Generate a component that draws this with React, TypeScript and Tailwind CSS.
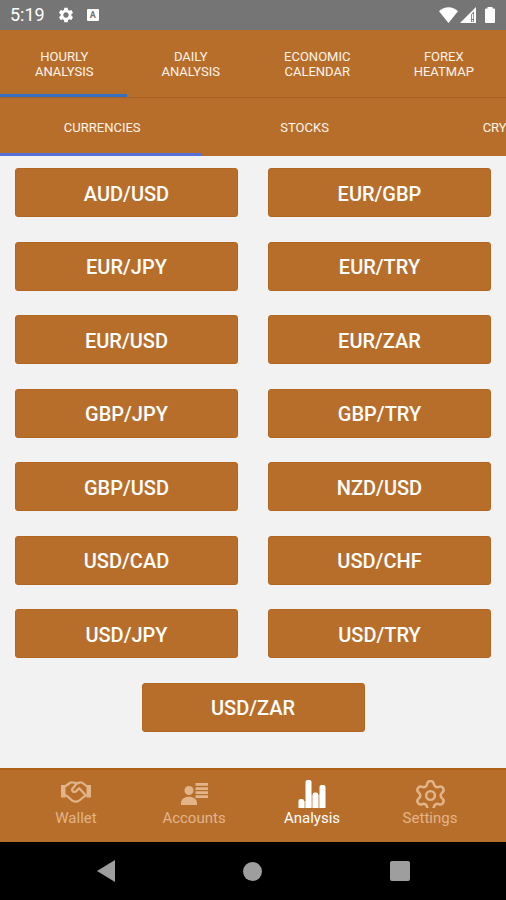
import React, { useState } from 'react';
import { Settings } from 'lucide-react';
import { MdSettings } from 'react-icons/md';

const SECTIONS = ['Hourly Analysis', 'Daily Analysis', 'Economic Calendar', 'Forex Heatmap'];
const MARKETS = ['Currencies', 'Stocks', 'Crypto'];
const PAIRS = [
  'AUD/USD', 'EUR/GBP',
  'EUR/JPY', 'EUR/TRY',
  'EUR/USD', 'EUR/ZAR',
  'GBP/JPY', 'GBP/TRY',
  'GBP/USD', 'NZD/USD',
  'USD/CAD', 'USD/CHF',
  'USD/JPY', 'USD/TRY',
  'USD/ZAR',
];

const HandshakeIcon = () => (
  <svg width="30" height="28" viewBox="0 0 30 28" fill="none" stroke="currentColor" strokeWidth="2.2" strokeLinejoin="round">
    <path d="M0 5h4.500v12.500H0zM25.500 5H30v12.500h-4.500z" fill="currentColor" stroke="none" />
    <path d="M4 6.500 9.500 2.500H13l2.500 1 2.500-1h3l5 4" />
    <path d="M4 15.500h1.500L11 20.300q3.700 2.600 7.400 0L24.500 15.500H26" />
    <path d="M18.500 2.700 15.500 3.700 11 9.500q.3 3.500 4 1.900l3.200-3.200 6.300 6.800" />
  </svg>
);

const AccountsIcon = () => (
  <svg width="28" height="28" viewBox="0 0 28 28" fill="currentColor">
    <circle cx="9" cy="10.500" r="4.500" />
    <path d="M1 25v-2c0-4 3.600-6.300 8-6.300s8 2.300 8 6.300v2z" />
    <path d="M15.500 3H28v2.800H15.500zM15.500 7.300H28V10H15.500zM15.500 11.300H28V14H15.500zM15.500 15.200H28V18H15.500z" />
  </svg>
);

const BarsIcon = () => (
  <svg width="28" height="28" viewBox="0 0 28 28" fill="currentColor">
    <path d="M.5 28v-7q0-2 2-2H4q2 0 2 2v7zM7.500 28V2q0-2 2-2h2q2 0 2 2v26zM14.700 28V14.500q0-2 2-2h1.500q2 0 2 2V28zM21.500 28V7q0-2 2-2h2q2 0 2 2v21z" />
    <path d="M6 21h1.500v7H6zM13.500 14.500h1.200V28h-1.200zM20.200 14.500h1.300V28h-1.300z" opacity=".6" />
  </svg>
);

const NAV_ITEMS = [
  { label: 'Wallet', icon: <HandshakeIcon /> },
  { label: 'Accounts', icon: <AccountsIcon /> },
  { label: 'Analysis', icon: <BarsIcon /> },
  // The gear is taller than its slot, so its lowest tooth is cut
  { label: 'Settings', icon: <Settings size={35} strokeWidth={1.7} className="-mt-0.5" /> },
];

const StatusBar = () => (
  <div className="h-[30px] shrink-0 bg-[#757575] text-white flex items-center px-2.5">
    <span className="text-[18px] leading-6">5:19</span>
    <MdSettings size={18} className="ml-3" />
    <span className="ml-3 w-3 h-3 rounded-[1px] bg-white text-[#757575] text-[9px] leading-3 font-bold text-center">A</span>
    <div className="ml-auto flex items-center gap-0.5">
      <svg width="19" height="16" viewBox="0 0 19 16" fill="currentColor">
        <path d="M9.500 16 0 4.200C5.500-1 13.500-1 19 4.200z" />
      </svg>
      <svg width="16" height="16" viewBox="0 0 16 16" fill="currentColor">
        <path fillRule="evenodd" d="M0 16 16 0v16zM11 7.500V15h3V4.500z" />
        <path d="M11.800 7h1.500v5h-1.500zM11.800 13h1.500v1.500h-1.500z" />
      </svg>
      <svg width="12" height="16" viewBox="0 0 12 16" className="ml-1.5" fill="currentColor">
        <path d="M3.500 0h5v1.500H10q1 0 1 1V15q0 1-1 1H2q-1 0-1-1V2.500q0-1 1-1h1.500z" />
      </svg>
    </div>
  </div>
);

const App: React.FC = () => {
  const [section, setSection] = useState('Hourly Analysis');
  const [market, setMarket] = useState('Currencies');
  const [screen, setScreen] = useState('Analysis');

  return (
    <div className="min-h-screen flex flex-col bg-[#f2f2f2] font-['Roboto',sans-serif] select-none overflow-hidden">
      <StatusBar />

      {/* Section tabs */}
      <div className="h-[68px] shrink-0 grid grid-cols-4 bg-[#b86e2b] border-b border-[#a9611f]">
        {SECTIONS.map(name => (
          <button
            key={name}
            onClick={() => setSection(name)}
            className={`pl-6 pr-[22px] pt-1 border-b-[3px] text-[13px] leading-[15px] uppercase text-[#fff4ea] ${section === name ? 'border-[#3470c4]' : 'border-transparent'}`}
          >
            {name}
          </button>
        ))}
      </div>

      <div className="h-[58px] shrink-0 flex overflow-hidden bg-[#b86e2b]">
        {MARKETS.map(name => (
          <button
            key={name}
            onClick={() => setMarket(name)}
            className={`w-2/5 shrink-0 pl-0.5 pt-1 border-b-[3px] text-[13px] leading-[15px] uppercase text-[#fff4ea] ${market === name ? 'border-[#5870dc]' : 'border-transparent'}`}
          >
            {name}
          </button>
        ))}
      </div>

      <div className="flex-1 flex flex-wrap justify-center content-between pt-3 pb-9">
        {PAIRS.map(pair => (
          <div key={pair} className="w-1/2 px-[15px]">
            <button className="w-full h-[49px] pt-0.5 rounded-[3px] bg-[#b86e2b] border border-[#b26622] text-white text-[20px] leading-6 font-medium">
              {pair}
            </button>
          </div>
        ))}
      </div>

      <nav className="h-[74px] shrink-0 grid grid-cols-4 px-[17px] bg-[#b86e2b] border-t-2 border-[#ae6218]">
        {NAV_ITEMS.map(({ label, icon }) => (
          <button
            key={label}
            onClick={() => setScreen(label)}
            className={`flex flex-col items-center pt-2.5 text-[15px] leading-5 ${screen === label ? 'text-white' : 'text-[#e2b48a]'}`}
          >
            <span className="h-7 overflow-hidden">{icon}</span>
            {label}
          </button>
        ))}
      </nav>

      <div className="h-[58px] shrink-0 grid grid-cols-3 items-center justify-items-center px-[33px] bg-black text-[#9e9e9e]">
        <button aria-label="Back">
          <svg width="18" height="22" viewBox="0 0 18 22" fill="currentColor">
            <path d="M18 0v22L0 11z" />
          </svg>
        </button>
        <button aria-label="Home" className="w-[19px] h-[19px] rounded-full bg-[#9e9e9e]" />
        <button aria-label="Recent apps" className="w-5 h-5 rounded-[2px] bg-[#9e9e9e]" />
      </div>
    </div>
  );
};

export default App;
